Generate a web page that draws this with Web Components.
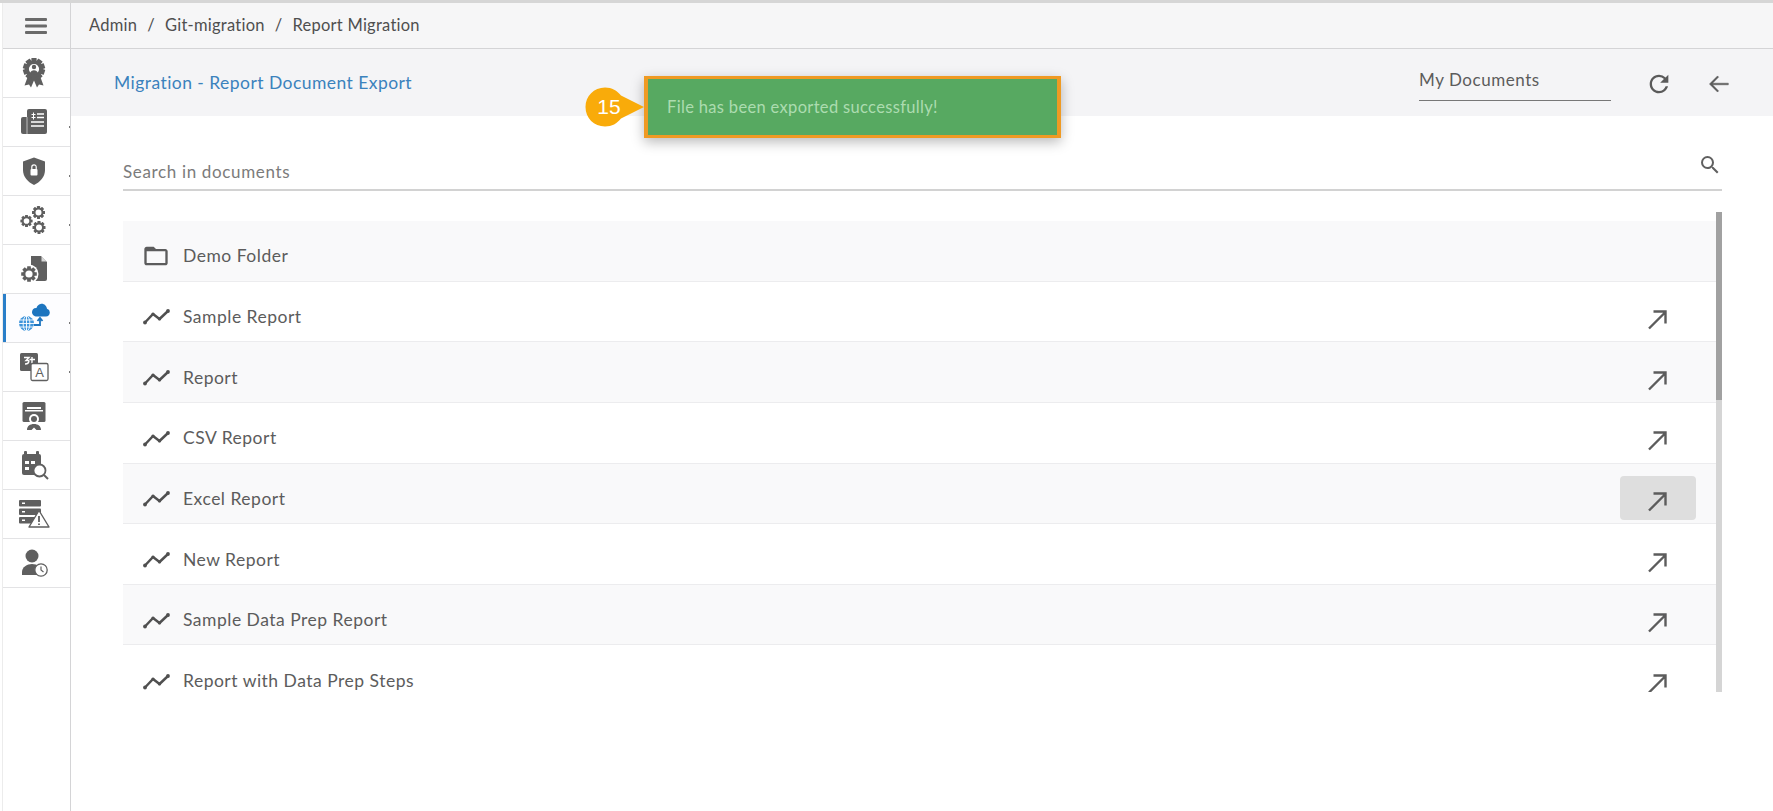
<!DOCTYPE html>
<html lang="en">
<head>
<meta charset="utf-8">
<title>Report Migration</title>
<style>
  html, body { margin: 0; height: 100%; overflow: hidden; background: #fff; }
  body { font-family: "Lato", "Liberation Sans", sans-serif; color: #5c5c5c; }
</style>
</head>
<body>
<app-shell>
  <side-nav slot="nav">
    <nav-item menu-toggle icon="menu"></nav-item>
    <nav-item icon="award"></nav-item>
    <nav-item icon="news" dot></nav-item>
    <nav-item icon="shield" dot></nav-item>
    <nav-item icon="gears" dot></nav-item>
    <nav-item icon="filegear"></nav-item>
    <nav-item icon="globecloud" active dot></nav-item>
    <nav-item icon="translate" dot></nav-item>
    <nav-item icon="presenter"></nav-item>
    <nav-item icon="calsearch"></nav-item>
    <nav-item icon="serverwarn"></nav-item>
    <nav-item icon="userclock"></nav-item>
  </side-nav>
  <crumb-bar>
    <span>Admin</span><span>Git-migration</span><span>Report Migration</span>
  </crumb-bar>
  <title-bar heading="Migration - Report Document Export" select="My Documents"></title-bar>
  <search-box placeholder="Search in documents"></search-box>
  <doc-list>
    <doc-row type="folder" label="Demo Folder"></doc-row>
    <doc-row label="Sample Report"></doc-row>
    <doc-row label="Report"></doc-row>
    <doc-row label="CSV Report"></doc-row>
    <doc-row label="Excel Report" hover></doc-row>
    <doc-row label="New Report"></doc-row>
    <doc-row label="Sample Data Prep Report"></doc-row>
    <doc-row label="Report with Data Prep Steps"></doc-row>
  </doc-list>
  <toast-msg slot="overlay" step="15">File has been exported successfully!</toast-msg>
</app-shell>

<script>
// ring with teeth, hole is left transparent unless a fill is given
const gear = (cx, cy, r, hole = 'none', teeth = 8) => {
  let out = ''
  for (let i = 0; i < teeth; i++) {
    const w = r * 0.62
    out += `<rect x="${cx - w / 2}" y="${cy - r * 1.3}" width="${w}" height="${r * 0.55}" rx=".4" transform="rotate(${i * 360 / teeth} ${cx} ${cy})"/>`
  }
  return out + `<circle cx="${cx}" cy="${cy}" r="${r * 0.8}" fill="${hole}" stroke="currentColor" stroke-width="${r * 0.4}"/>`
}

const ICONS = {
  menu: '<rect x="5" y="8" width="22" height="3" rx="1"/><rect x="5" y="14.5" width="22" height="3" rx="1"/><rect x="5" y="21" width="22" height="3" rx="1"/>',
  award: `<path d="M10 19 6.500 28.500l4.500-1 2 3 3-7 3 7 2-3 4.500 1L22 19z"/>${gear(16, 12, 8.500, '#fff', 10)}<circle cx="16" cy="10" r="2.200"/><path d="M12 16.200c.4-2 2.200-3 4-3s3.600 1 4 3c-1 .8-2.500 1.200-4 1.200s-3-.4-4-1.200z"/>`,
  news: '<rect x="9" y="3" width="20" height="25" rx="2"/><path d="M3 13a2 2 0 0 1 2-2h6v17H5a2 2 0 0 1-2-2z"/><path d="M9 11v17" stroke="#fff" stroke-width=".6"/><g stroke="#fff" stroke-width="1.500"><path d="M19 8h7M19 11.500h7M13 16h13M13 20h13"/><path d="M15.500 6.500v7M13.500 8.500h4M13.500 11.500h4" stroke-width="1"/></g>',
  shield: '<path d="M16 2.500 27 6.500V15c0 7-5 12-11 15C10 27 5 22 5 15V6.500z"/><rect x="12.500" y="14" width="7" height="6.500" rx="1" fill="#fff"/><path d="M13.800 14v-2a2.200 2.200 0 0 1 4.400 0v2" fill="none" stroke="#fff" stroke-width="1.200"/>',
  gears: gear(20.500, 8.500, 5) + gear(8.500, 17, 4.700) + gear(21, 23.500, 5),
  filegear: `<path d="M13 3h10l6 6v17a2 2 0 0 1-2 2H13z"/><path d="M23.500 3.500v5h5z" fill="#fff" opacity=".75"/><circle cx="11" cy="21" r="9.500" fill="#fff"/>${gear(11, 21, 6, '#fff')}`,
  globecloud: `<circle cx="8.500" cy="21.500" r="7.500" fill="#3f95db"/><g fill="none" stroke="#fff" stroke-width=".9"><ellipse cx="8.500" cy="21.500" rx="3.400" ry="7.500"/><path d="M1 21.500h15M2 18h13M2 25h13M8.500 14v15"/></g>
    <path d="M19 14.500h9a4 4 0 0 0 1-7.800C28.500 3.500 25.500 1 22.500 2c-2 .5-3.500 2-4 4-3-.2-4.500 2-4.500 4.200s2 4.300 5 4.300z" fill="#1d75bf"/>
    <path d="M16 23h6v-6M19.500 19l2.500-3 2.500 3" fill="none" stroke="#1d75bf" stroke-width="1.800"/>`,
  translate: '<rect x="2" y="2" width="18" height="18" rx="1.500"/><path d="M6 6.500h5l-3 3h3M7 13c2 0 4-1 4-3.500M14 6v9M11.500 8.500H17" fill="none" stroke="#fff" stroke-width="1.400"/><rect x="13" y="12.500" width="17" height="17" rx="1.500" fill="#fff" stroke="currentColor" stroke-width="1.300"/><text x="21.500" y="26" font-family="Liberation Sans, sans-serif" font-size="13" text-anchor="middle">A</text>',
  presenter: '<rect x="4.500" y="2" width="23" height="20" rx="1.500"/><rect x="9" y="7" width="14" height="2" fill="#fff"/><rect x="7" y="10" width="18" height="1.500" fill="#fff"/><circle cx="16" cy="19" r="5" fill="#fff"/><circle cx="16" cy="19" r="3"/><path d="M9 30c0-4 3-6 7-6s7 2 7 6h-4.500l-2.500-2.500-2.500 2.500z"/>',
  calsearch: '<rect x="6" y="2" width="3" height="5" rx="1"/><rect x="18" y="2" width="3" height="5" rx="1"/><path d="M4 7a2 2 0 0 1 2-2h15a2 2 0 0 1 2 2v19H6a2 2 0 0 1-2-2z"/><g fill="#fff"><rect x="7" y="12" width="4" height="3"/><rect x="13" y="12" width="4" height="3"/><rect x="7" y="18" width="4" height="3"/></g><circle cx="21.500" cy="21.500" r="6" fill="#fff" stroke="currentColor" stroke-width="1.800"/><path d="m26 26 4 4" stroke="currentColor" stroke-width="2"/>',
  serverwarn: '<rect x="1" y="2" width="22" height="6.500" rx="1"/><rect x="1" y="10.500" width="22" height="6.500" rx="1"/><rect x="1" y="19" width="22" height="6.500" rx="1"/><path d="M4 5.200h3M4 13.700h3M4 22.200h3" stroke="#fff" stroke-width="1.400"/><path d="M21 12.500 31 29H11z" fill="#fff" stroke="currentColor" stroke-width="1.400" stroke-linejoin="round"/><path d="M21 18v6M21 25.500v1.500" stroke="currentColor" stroke-width="1.800"/>',
  userclock: '<circle cx="14" cy="9" r="6.500"/><path d="M4 28v-3c0-5 5-8 10-8s10 3 10 8v3z"/><circle cx="23" cy="23" r="6.200" fill="#fff" stroke="currentColor" stroke-width="1.300"/><path d="M23 19.500V23l2.500 2" fill="none" stroke="currentColor" stroke-width="1.200"/>'
}

class AppShell extends HTMLElement {
  constructor () {
    super()
    this.attachShadow({ mode: 'open' })
    this.shadowRoot.innerHTML = `
      <style>
        :host { display: flex; position: relative; height: 811px; box-sizing: border-box; border-top: 3px solid #d6d6d6; padding-left: 2px; }
        .main { flex: 1; min-width: 0; display: flex; flex-direction: column; }
      </style>
      <slot name="nav"></slot>
      <div class="main"><slot></slot></div>
      <slot name="overlay"></slot>
    `
  }
}
customElements.define('app-shell', AppShell)

class SideNav extends HTMLElement {
  constructor () {
    super()
    this.attachShadow({ mode: 'open' })
    this.shadowRoot.innerHTML = `
      <style>
        :host { display: flex; flex-direction: column; flex: none; width: 69px; height: 100%; border-left: 1px solid #ececec; border-right: 1px solid #d4d4d6; box-sizing: border-box; }
      </style>
      <slot></slot>
    `
  }
}
customElements.define('side-nav', SideNav)

class NavItem extends HTMLElement {
  constructor () {
    super()
    this.attachShadow({ mode: 'open' })
  }

  connectedCallback () {
    this.shadowRoot.innerHTML = `
      <style>
        :host { display: flex; align-items: center; justify-content: center; position: relative; height: 49px; box-sizing: border-box; border-bottom: 1px solid #e3e3e5; color: #5f5f5f; padding-right: 6px; }
        :host([menu-toggle]) { height: 46px; padding-right: 2px; background: #f5f5f6; border-bottom-color: #d4d4d6; color: #6a6a6a; }
        :host([active]) { background: #fdfdff; }
        :host([active])::before { content: ""; position: absolute; left: 0; top: 0; bottom: 0; width: 3px; background: #2a7fc9; }
        :host([dot])::after { content: ""; position: absolute; right: 0; top: 28px; width: 1.500px; height: 1.500px; background: #777; }
        svg { display: block; fill: currentColor; }
      </style>
      <svg width="32" height="32" viewBox="0 0 32 32">${ICONS[this.getAttribute('icon')]}</svg>
    `
  }
}
customElements.define('nav-item', NavItem)

class CrumbBar extends HTMLElement {
  constructor () {
    super()
    this.attachShadow({ mode: 'open' })
    this.shadowRoot.innerHTML = `
      <style>
        :host { display: flex; align-items: center; flex: none; height: 46px; box-sizing: border-box; padding: 0 0 2px 18px; background: #f6f6f7; border-bottom: 1px solid #d4d4d6; font-size: 16.500px; letter-spacing: .25px; color: #4f4f4f; }
        ::slotted(span:not(:last-child))::after { content: "/"; margin: 0 10px; }
      </style>
      <slot></slot>
    `
  }
}
customElements.define('crumb-bar', CrumbBar)

class TitleBar extends HTMLElement {
  constructor () {
    super()
    this.attachShadow({ mode: 'open' })
  }

  connectedCallback () {
    this.shadowRoot.innerHTML = `
      <style>
        :host { display: flex; align-items: center; flex: none; height: 67px; box-sizing: border-box; padding: 0 40px 0 43px; background: #f4f4f6; }
        h1 { margin: 0; flex: 1; font: inherit; font-size: 17.500px; letter-spacing: .45px; color: #3b82bd; }
        .select { width: 192px; height: 42px; box-sizing: border-box; padding-top: 10px; border-bottom: 1px solid #777; font-size: 17px; letter-spacing: .55px; color: #5c5c5c; margin-right: 34px; margin-top: -5px; }
        svg { display: block; fill: #5a5a5a; }
        .refresh { margin-right: 32px; margin-top: 2px; }
        .back { margin-top: 2px; stroke: #5a5a5a; stroke-width: .4; }
      </style>
      <h1>${this.getAttribute('heading')}</h1>
      <div class="select">${this.getAttribute('select')}</div>
      <svg class="refresh" width="28" height="28" viewBox="0 0 24 24"><path d="M17.650 6.350A7.958 7.958 0 0 0 12 4c-4.420 0-7.990 3.580-7.990 8s3.570 8 7.990 8c3.730 0 6.840-2.550 7.730-6h-2.080A5.990 5.990 0 0 1 12 18c-3.310 0-6-2.690-6-6s2.690-6 6-6c1.660 0 3.140.69 4.220 1.780L13 11h7V4l-2.350 2.350z"/></svg>
      <svg class="back" width="28" height="28" viewBox="0 0 24 24"><path d="M20 11.300H6.500l5.200-5.200-1-1L3.800 12l6.900 6.900 1-1-5.200-5.200H20z"/></svg>
    `
  }
}
customElements.define('title-bar', TitleBar)

class SearchBox extends HTMLElement {
  constructor () {
    super()
    this.attachShadow({ mode: 'open' })
  }

  connectedCallback () {
    this.shadowRoot.innerHTML = `
      <style>
        :host { display: flex; align-items: flex-end; justify-content: space-between; flex: none; height: 42px; margin: 33px 51px 0 52px; box-sizing: border-box; border-bottom: 2px solid #d2d2d2; padding-bottom: 7px; font-size: 17px; letter-spacing: .65px; color: #7b7b7b; }
        svg { display: block; fill: #606060; margin-bottom: 5px; }
      </style>
      <span>${this.getAttribute('placeholder')}</span>
      <svg width="24" height="24" viewBox="0 0 24 24"><path d="M15.500 14h-.79l-.28-.27A6.471 6.471 0 0 0 16 9.500 6.500 6.500 0 1 0 9.500 16c1.610 0 3.090-.59 4.230-1.570l.27.28v.79l5 4.990L20.490 19l-4.990-5zm-6 0C7.010 14 5 11.990 5 9.500S7.010 5 9.500 5 14 7.010 14 9.500 11.990 14 9.500 14z"/></svg>
    `
  }
}
customElements.define('search-box', SearchBox)

class DocList extends HTMLElement {
  constructor () {
    super()
    this.attachShadow({ mode: 'open' })
    this.shadowRoot.innerHTML = `
      <style>
        :host { display: flex; flex: none; height: 480px; margin: 21px 51px 0 52px; }
        .rows { flex: 1; min-width: 0; padding-top: 9px; overflow: hidden; }
        .track { flex: none; width: 6px; background: #d5d5d5; }
        .thumb { height: 188px; background: #a1a1a1; }
      </style>
      <div class="rows"><slot></slot></div>
      <div class="track"><div class="thumb"></div></div>
    `
  }
}
customElements.define('doc-list', DocList)

class DocRow extends HTMLElement {
  constructor () {
    super()
    this.attachShadow({ mode: 'open' })
  }

  connectedCallback () {
    const isFolder = this.getAttribute('type') === 'folder'
    const icon = isFolder
      ? '<svg class="lead" width="28" height="28" viewBox="0 0 24 24"><path fill="#5c5c5c" d="M20 6h-8l-2-2H4c-1.100 0-1.990.9-1.990 2L2 18c0 1.100.9 2 2 2h16c1.100 0 2-.9 2-2V8c0-1.100-.9-2-2-2zm0 12H4V8h16v10z"/></svg>'
      : '<svg class="lead" width="28" height="28" viewBox="0 0 28 28"><path d="M3 20.500l8-8.500 6.500 5L26 9" fill="none" stroke="#505050" stroke-width="2.500" stroke-linejoin="round"/><circle cx="3" cy="20.500" r="1.900" fill="#505050"/><circle cx="11" cy="12" r="1.600" fill="#505050"/><circle cx="17.500" cy="17" r="1.600" fill="#505050"/><circle cx="26" cy="9" r="1.900" fill="#505050"/></svg>'
    const action = isFolder
      ? ''
      : '<div class="action"><svg width="24" height="24" viewBox="0 0 24 24"><path d="M3 21.500 19 5.500M7.500 4.500H19.500V16.500" fill="none" stroke="#5c5c5c" stroke-width="2.400"/></svg></div>'
    this.shadowRoot.innerHTML = `
      <style>
        :host { display: flex; align-items: center; height: 60.650px; box-sizing: border-box; padding: 10px 20px 0 19px; border-bottom: 1px solid #ececee; font-size: 17.500px; letter-spacing: .5px; color: #5c5c5c; }
        :host(:nth-child(odd)) { background: #f9f9fa; }
        :host(:last-child) { border-bottom: 0; }
        .lead { display: block; flex: none; margin-right: 13px; }
        .label { flex: 1; }
        .action { display: flex; align-items: center; justify-content: center; width: 76px; height: 44px; border-radius: 4px; padding-top: 5px; box-sizing: border-box; }
        :host([hover]) .action { background: #dedede; }
        svg { display: block; }
      </style>
      ${icon}
      <span class="label">${this.getAttribute('label')}</span>
      ${action}
    `
  }
}
customElements.define('doc-row', DocRow)

class ToastMsg extends HTMLElement {
  constructor () {
    super()
    this.attachShadow({ mode: 'open' })
  }

  connectedCallback () {
    this.shadowRoot.innerHTML = `
      <style>
        :host { display: flex; align-items: center; position: absolute; left: 585px; top: 73px; }
        .badge { position: relative; flex: none; width: 59px; height: 40px; }
        .badge svg { position: absolute; left: 0; top: 0; display: block; fill: #f9ab0a; }
        .badge span { position: absolute; left: 0; top: 0; width: 48px; text-align: center; font: 21px/40px "Liberation Sans", sans-serif; color: #fff; }
        .box { width: 417px; height: 62px; box-sizing: border-box; display: flex; align-items: center; padding-left: 19px; background: #57a961; border: solid #ef9a23; border-width: 3px 4px; box-shadow: 0 4px 12px rgba(0, 0, 0, .28); color: #acdcb0; font-size: 16.500px; letter-spacing: .33px; }
      </style>
      <div class="badge">
        <svg width="59" height="40" viewBox="0 0 59 40"><path d="M20 .5c7 0 12 3 16 8L59 20 36 31.500c-4 5-9 8-16 8C9 39.500.5 31 .5 20S9 .5 20 .5z"/></svg>
        <span>${this.getAttribute('step')}</span>
      </div>
      <div class="box"><slot></slot></div>
    `
  }
}
customElements.define('toast-msg', ToastMsg)
</script>
</body>
</html>
